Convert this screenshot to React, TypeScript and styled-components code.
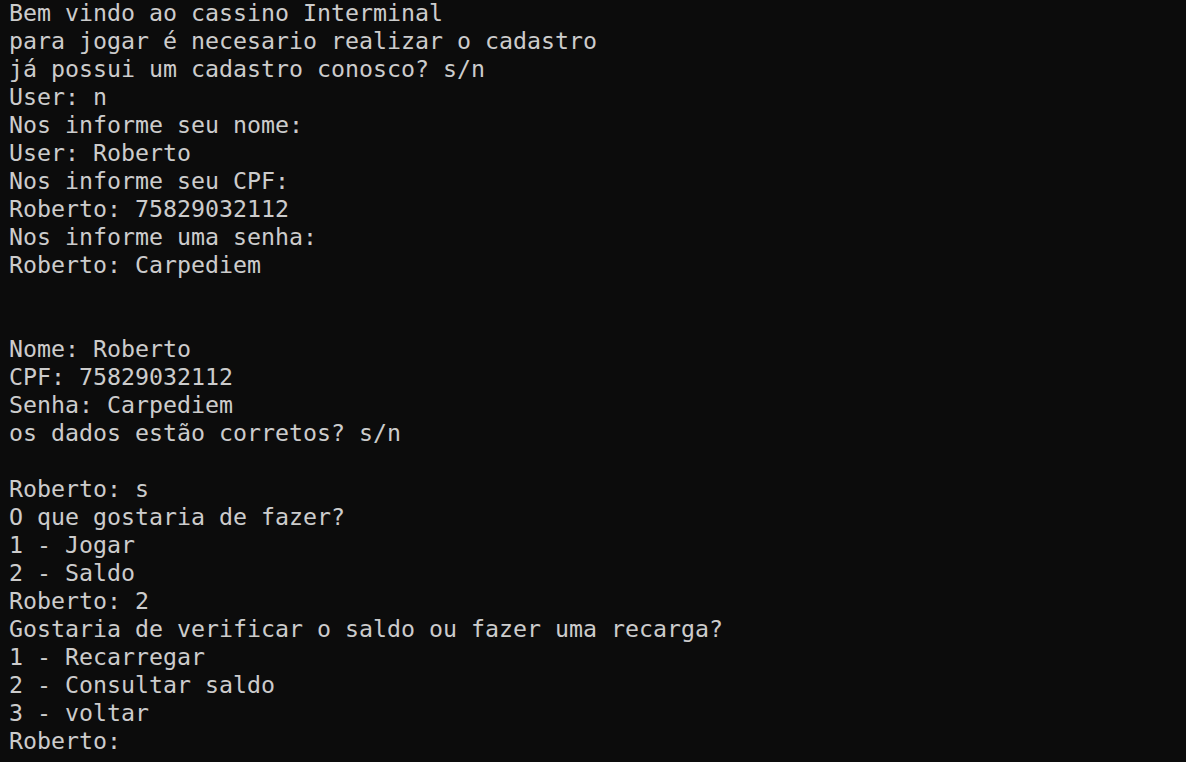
import React from "react";
import styled, { createGlobalStyle } from "styled-components";

const Global = createGlobalStyle`
  html, body { margin: 0; padding: 0; background: #0c0c0c; }
  body { overflow: hidden; }
`;

const Terminal = styled.div`
  width: 1186px;
  height: 763px;
  box-sizing: border-box;
  margin-top: -1px;
  padding: 0 0 0 9px;
  background: #0c0c0c;
  color: #cccccc;
  font-family: "DejaVu Sans Mono", "Liberation Mono", monospace;
  font-size: 23.25px;
  line-height: 28px;
  overflow: hidden;
`;

const Line = styled.div`
  white-space: pre;
  height: 28px;
`;

const lines = [
  "Bem vindo ao cassino Interminal",
  "para jogar é necesario realizar o cadastro",
  "já possui um cadastro conosco? s/n",
  "User: n",
  "Nos informe seu nome:",
  "User: Roberto",
  "Nos informe seu CPF:",
  "Roberto: 75829032112",
  "Nos informe uma senha:",
  "Roberto: Carpediem",
  "",
  "",
  "Nome: Roberto",
  "CPF: 75829032112",
  "Senha: Carpediem",
  "os dados estão corretos? s/n",
  "",
  "Roberto: s",
  "O que gostaria de fazer?",
  "1 - Jogar",
  "2 - Saldo",
  "Roberto: 2",
  "Gostaria de verificar o saldo ou fazer uma recarga?",
  "1 - Recarregar",
  "2 - Consultar saldo",
  "3 - voltar",
  "Roberto: ",
];

export default function App() {
  return (
    <>
      <Global />
      <Terminal>
        {lines.map((l, i) => (
          <Line key={i}>{l}</Line>
        ))}
      </Terminal>
    </>
  );
}
